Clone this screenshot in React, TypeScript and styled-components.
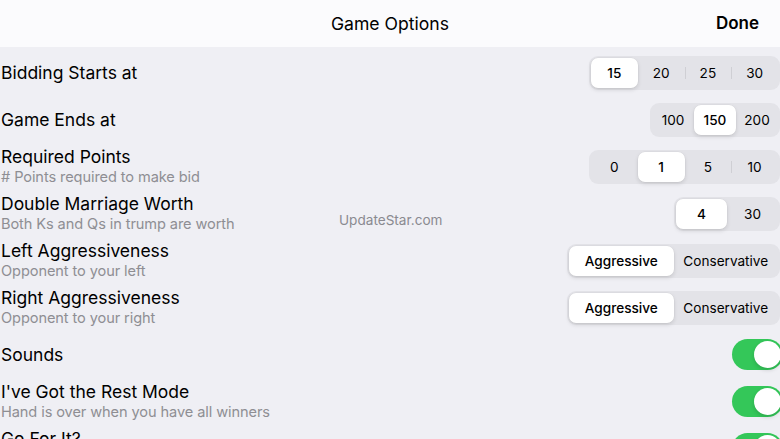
import React, { useState } from 'react';
import styled, { createGlobalStyle } from 'styled-components';

const GlobalStyle = createGlobalStyle`
    html, body {
        margin: 0;
        padding: 0;
        background: #efeff4;
    }
    body {
        font-family: Inter, "Noto Sans", sans-serif;
        color: #000;
    }
`;

const Page = styled.div`
    width: 780px;
    height: 439px;
    overflow: hidden;
    position: relative;
    background: #efeff4;
`;

const Header = styled.div`
    height: 47px;
    background: #fbfbfd;
    display: flex;
    align-items: center;
    justify-content: center;
    position: relative;
`;

const HeaderTitle = styled.div`
    font-size: 17.6px;
    font-weight: 400;
`;

const DoneBtn = styled.div`
    position: absolute;
    right: 21px;
    top: 13px;
    font-size: 17px;
    font-weight: 600;
`;

const List = styled.div`
    display: flex;
    flex-direction: column;
    padding-top: 2px;
`;

const Row = styled.div`
    height: 47px;
    display: flex;
    align-items: center;
    justify-content: space-between;
`;

const Labels = styled.div`
    display: flex;
    flex-direction: column;
    padding-left: 1px;
`;

const Title = styled.div`
    font-size: 17.5px;
    line-height: 21px;
`;

const Subtitle = styled.div`
    font-size: 14.6px;
    line-height: 19px;
    height: 19px;
    margin-top: 1px;
    color: #8e8e93;
    letter-spacing: -0.1px;
`;

const Segmented = styled.div`
    display: flex;
    height: 34px;
    padding: 2px;
    box-sizing: border-box;
    background: #e3e3e8;
    border-radius: 9px;
`;

const Segment = styled.div<{ $width: number; $selected: boolean; $divider: boolean }>`
    width: ${({ $width }) => $width}px;
    display: flex;
    align-items: center;
    justify-content: center;
    font-size: 13.6px;
    font-weight: ${({ $selected }) => ($selected ? 500 : 400)};
    border-radius: 7px;
    position: relative;
    background: ${({ $selected }) => ($selected ? '#fff' : 'transparent')};
    box-shadow: ${({ $selected }) => ($selected ? '0 2px 4px rgba(0,0,0,0.12), 0 0 0 0.5px rgba(0,0,0,0.04)' : 'none')};
    &::before {
        content: '';
        display: ${({ $divider }) => ($divider ? 'block' : 'none')};
        position: absolute;
        left: 0;
        top: 9px;
        height: 12px;
        width: 1px;
        background: #cfcfd4;
    }
`;

const Toggle = styled.div<{ $on: boolean }>`
    width: 51px;
    height: 31px;
    border-radius: 16px;
    background: ${({ $on }) => ($on ? '#34c759' : '#e3e3e8')};
    margin-right: -3px;
    display: flex;
    align-items: center;
    justify-content: ${({ $on }) => ($on ? 'flex-end' : 'flex-start')};
    padding: 2px;
    box-sizing: border-box;
`;

const Knob = styled.div`
    width: 27px;
    height: 27px;
    border-radius: 50%;
    background: #fff;
    box-shadow: 0 2px 4px rgba(0,0,0,0.15);
`;

const Watermark = styled.div`
    position: absolute;
    left: 339px;
    top: 212px;
    font-size: 13.6px;
    color: #8a8a90;
`;

type SegProps = { options: string[]; initial: number; width: number };

const SegmentControl = ({ options, initial, width }: SegProps) => {
    const [selected, setSelected] = useState(initial);
    return (
        <Segmented>
            {options.map((opt, i) => (
                <Segment
                    key={opt}
                    $width={width}
                    $selected={i === selected}
                    $divider={i > 0 && i !== selected && i - 1 !== selected}
                    onClick={() => setSelected(i)}
                >
                    {opt}
                </Segment>
            ))}
        </Segmented>
    );
};

const Switch = () => {
    const [on, setOn] = useState(true);
    return (
        <Toggle $on={on} onClick={() => setOn(!on)}>
            <Knob />
        </Toggle>
    );
};

type Option = {
    title: string;
    sub?: string;
    control: React.ReactNode;
};

const options: Option[] = [
    { title: 'Bidding Starts at', control: <SegmentControl options={['15', '20', '25', '30']} initial={0} width={46.75} /> },
    { title: 'Game Ends at', control: <SegmentControl options={['100', '150', '200']} initial={1} width={42} /> },
    { title: 'Required Points', sub: '# Points required to make bid', control: <SegmentControl options={['0', '1', '5', '10']} initial={1} width={46.75} /> },
    { title: 'Double Marriage Worth', sub: 'Both Ks and Qs in trump are worth', control: <SegmentControl options={['4', '30']} initial={0} width={51} /> },
    { title: 'Left Aggressiveness', sub: 'Opponent to your left', control: <SegmentControl options={['Aggressive', 'Conservative']} initial={0} width={104.5} /> },
    { title: 'Right Aggressiveness', sub: 'Opponent to your right', control: <SegmentControl options={['Aggressive', 'Conservative']} initial={0} width={104.5} /> },
    { title: 'Sounds', control: <Switch /> },
    { title: "I've Got the Rest Mode", sub: 'Hand is over when you have all winners', control: <Switch /> },
    // its subtitle is below the fold, only the title peeks in
    { title: 'Go For It?', sub: '', control: <Switch /> },
];

const App = () => {
    return (
        <Page>
            <GlobalStyle />
            <Header>
                <HeaderTitle>Game Options</HeaderTitle>
                <DoneBtn>Done</DoneBtn>
            </Header>
            <List>
                {options.map((opt) => (
                    <Row key={opt.title}>
                        <Labels>
                            <Title>{opt.title}</Title>
                            {opt.sub !== undefined && <Subtitle>{opt.sub}</Subtitle>}
                        </Labels>
                        {opt.control}
                    </Row>
                ))}
            </List>
            <Watermark>UpdateStar.com</Watermark>
        </Page>
    );
};

export default App;
